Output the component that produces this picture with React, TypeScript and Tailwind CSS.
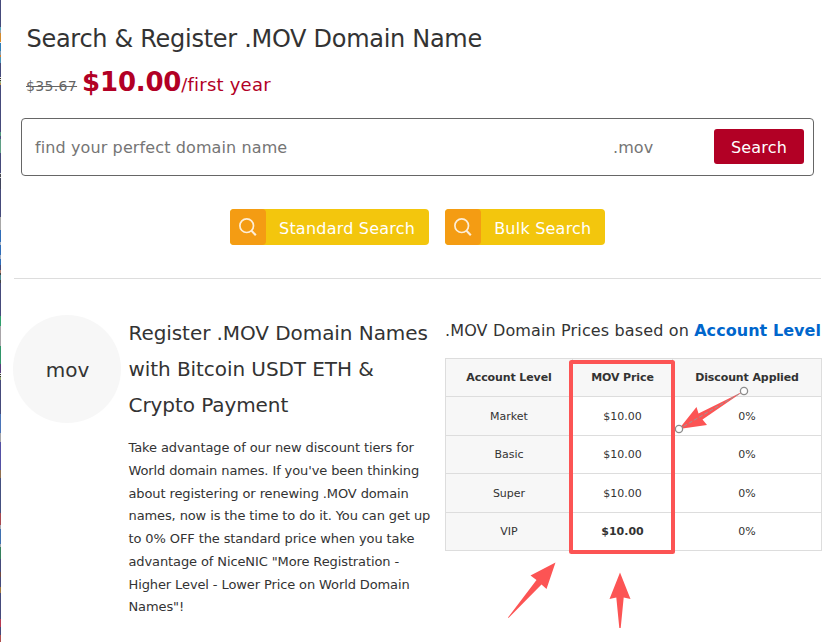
type Level = {
  name: string;
  price: string;
  discount: string;
  bold?: boolean;
};

const levels: Level[] = [
  { name: "Market", price: "$10.00", discount: "0%" },
  { name: "Basic", price: "$10.00", discount: "0%" },
  { name: "Super", price: "$10.00", discount: "0%" },
  { name: "VIP", price: "$10.00", discount: "0%", bold: true },
];

// [height, colour] of the thin strip along the left edge
const strip: [number, string][] = [
  [27, "#454a7b"],
  [3, "#55a6c0"],
  [3, "#98a3b0"],
  [9, "#d48a2c"],
  [1, "#e8e8e8"],
  [8, "#2f7db8"],
  [4, "#7f9ab0"],
  [2, "#d08030"],
  [6, "#4a94b8"],
  [14, "#454a7b"],
  [1, "#dddddd"],
  [1, "#333333"],
  [1, "#dddddd"],
  [1, "#333333"],
  [2, "#8fb080"],
  [2, "#b89050"],
  [47, "#454a7b"],
  [4, "#4f9a7c"],
  [3, "#4a5080"],
  [14, "#5f9f85"],
  [20, "#454a7b"],
  [1, "#cccccc"],
  [3, "#44464f"],
  [1, "#cccccc"],
  [11, "#40445c"],
  [28, "#454a7b"],
  [13, "#a8a8a8"],
  [12, "#2f6db8"],
  [3, "#a8b4c4"],
  [10, "#2f6db8"],
  [4, "#9aa8c0"],
  [6, "#2f6db8"],
  [5, "#454a7b"],
  [3, "#b08070"],
  [2, "#444444"],
  [5, "#4a8a94"],
  [3, "#444444"],
  [33, "#454a7b"],
  [10, "#2fa06c"],
  [20, "#a8a4a8"],
  [18, "#2f9468"],
  [9, "#54407c"],
  [1, "#dddddd"],
  [1, "#333333"],
  [1, "#dddddd"],
  [1, "#333333"],
  [3, "#90a070"],
  [34, "#454a7b"],
  [19, "#4a74b8"],
  [9, "#a4a4a8"],
  [28, "#5450a4"],
  [8, "#907050"],
  [35, "#445080"],
  [12, "#a84850"],
  [4, "#a8a8b0"],
  [15, "#3f70b0"],
  [3, "#a0a8b0"],
  [12, "#34805c"],
  [13, "#454a7b"],
  [5, "#704840"],
  [10, "#454a7b"],
  [6, "#a07840"],
  [26, "#454a7b"],
  [8, "#b83850"],
  [8, "#454a7b"],
  [8, "#b05050"],
];

function EdgeStrip() {
  return (
    <div className="w-px shrink-0">
      {strip.map(([height, backgroundColor], i) => (
        <div key={i} style={{ height, backgroundColor }} />
      ))}
    </div>
  );
}

function ModeButton({ label }: { label: string }) {
  return (
    <button
      type="button"
      className="flex h-9 items-center rounded bg-[#f3c60d] pr-3.5 text-white"
    >
      <span className="mr-[13px] flex size-9 rounded bg-[#f49c13] pt-[9px] pl-[9px]">
        <svg width="18" height="18" viewBox="0 0 18 18" fill="none" stroke="#fdeed8">
          <circle cx="7.7" cy="7.7" r="6.8" strokeWidth="1.7" />
          <path d="M12.5 12.8 L16.8 17.2" strokeWidth="2.1" />
        </svg>
      </span>
      <span className="pt-[3px] text-base tracking-[0.22px] whitespace-nowrap">{label}</span>
    </button>
  );
}

function SearchBox() {
  return (
    <div className="mt-[17px] ml-5 flex h-[58px] w-[793px] items-center rounded border border-[#666] pr-[9px] pl-[13px] text-base">
      <span className="w-[578px] pt-0.5 tracking-[0.11px] text-[#757575]">
        find your perfect domain name
      </span>
      <span className="flex-1 pt-0.5 tracking-[0.1px] text-[#757575]">.mov</span>
      <button
        type="button"
        className="mb-px h-[35px] w-[90px] rounded-[3px] bg-[#b20025] pt-0.5 tracking-[0.15px] text-white"
      >
        Search
      </button>
    </div>
  );
}

function PriceTable() {
  return (
    <table className="w-[376px] table-fixed border-collapse text-center text-[11px] text-[#333]">
      <colgroup>
        <col className="w-[127px]" />
        <col className="w-[100px]" />
        <col className="w-[149px]" />
      </colgroup>
      <thead>
        <tr className="h-[38px] bg-[#f7f7f7] tracking-[-0.11px]">
          <th className="border border-[#ddd] p-0 pt-0.5">Account Level</th>
          <th className="border border-[#ddd] p-0 pt-0.5">MOV Price</th>
          <th className="border border-[#ddd] p-0 pt-0.5">Discount Applied</th>
        </tr>
      </thead>
      <tbody>
        {levels.map((level) => (
          <tr key={level.name} className="h-[38.5px]">
            <td className="border border-[#ddd] bg-[#f7f7f7] p-0 pt-0.5">{level.name}</td>
            <td className={`border border-[#ddd] p-0 pt-0.5 ${level.bold ? "font-bold" : ""}`}>
              {level.price}
            </td>
            <td className="border border-[#ddd] p-0 pt-0.5">{level.discount}</td>
          </tr>
        ))}
      </tbody>
    </table>
  );
}

// Red frame and arrows drawn over the price table
function Markup() {
  return (
    <svg
      className="pointer-events-none absolute inset-0"
      width="835"
      height="642"
      viewBox="0 0 835 642"
      fill="none"
    >
      <rect x="571" y="362" width="102" height="190" rx="0.5" stroke="#fc5454" strokeWidth="4" />
      <g fill="#fc5454">
        <path d="M555.5 562.5 L546.5 589 L541.5 584.5 L508.5 618 L508 617.5 L536.5 580 L530.5 575.5 Z" />
        <path d="M620 572.5 L630.5 599 L623.7 597.5 L620.7 628 L619.3 628 L616.3 597.5 L609.5 599 Z" />
        <path d="M679 429 L696.5 407 L698.5 413.5 L744 391 L702.5 419.5 L707 425 Z" />
      </g>
      <path d="M744 391 L679 429" stroke="#999" strokeDasharray="4 2" />
      <circle cx="744" cy="391" r="3.6" fill="#fff" stroke="#8c8c8c" strokeWidth="1.3" />
      <circle cx="679" cy="429" r="3.6" fill="#fff" stroke="#8c8c8c" strokeWidth="1.3" />
    </svg>
  );
}

export default function App() {
  return (
    <div className="relative flex h-[642px] w-[835px] overflow-hidden bg-white font-['DejaVu_Sans',Verdana,sans-serif] text-[#333]">
      <EdgeStrip />
      <main className="flex-1">
        <h1 className="pt-[21px] pl-[25.5px] text-2xl leading-9 tracking-[-0.29px]">
          Search &amp; Register .MOV Domain Name
        </h1>
        <div className="mt-[5px] flex h-[39px] items-baseline pl-[25px] whitespace-nowrap text-[#b20025]">
          <del className="mr-[5px] text-sm tracking-[0.35px] text-[#666]">$35.67</del>
          <strong className="text-[26px] leading-[41px] tracking-[-0.2px]">$10.00</strong>
          <span className="text-lg tracking-[0.22px]">/first year</span>
        </div>
        <SearchBox />
        <div className="mt-[33px] ml-[229px] flex gap-4">
          <ModeButton label="Standard Search" />
          <ModeButton label="Bulk Search" />
        </div>
        <hr className="mt-[33px] ml-[13px] w-[807px] border-[#ddd]" />
        <div className="flex">
          <div className="mt-9 ml-3 flex size-[108px] shrink-0 items-center justify-center rounded-full bg-[#f7f7f7] pt-0.5 pl-px text-xl">
            mov
          </div>
          <section className="mt-9 ml-[7.5px] w-[316.5px] shrink-0 whitespace-nowrap">
            <h2 className="text-xl leading-9 tracking-[-0.07px]">
              Register .MOV Domain Names
              <br />
              with Bitcoin USDT ETH &amp;
              <br />
              Crypto Payment
            </h2>
            <p className="mt-3.5 text-[13px] leading-[22.75px] tracking-[-0.11px]">
              Take advantage of our new discount tiers for
              <br />
              World domain names. If you've been thinking
              <br />
              about registering or renewing .MOV domain
              <br />
              names, now is the time to do it. You can get up
              <br />
              to 0% OFF the standard price when you take
              <br />
              advantage of NiceNIC "More Registration -
              <br />
              Higher Level - Lower Price on World Domain
              <br />
              Names"!
            </p>
          </section>
          <section className="mt-9">
            <h3 className="pt-px mb-3 text-base leading-[30px] tracking-[0.14px] whitespace-nowrap">
              .MOV Domain Prices based on{" "}
              <a href="#" className="font-bold tracking-[0.05px] text-[#0066cc]">
                Account Level
              </a>
            </h3>
            <PriceTable />
          </section>
        </div>
      </main>
      <Markup />
    </div>
  );
}
